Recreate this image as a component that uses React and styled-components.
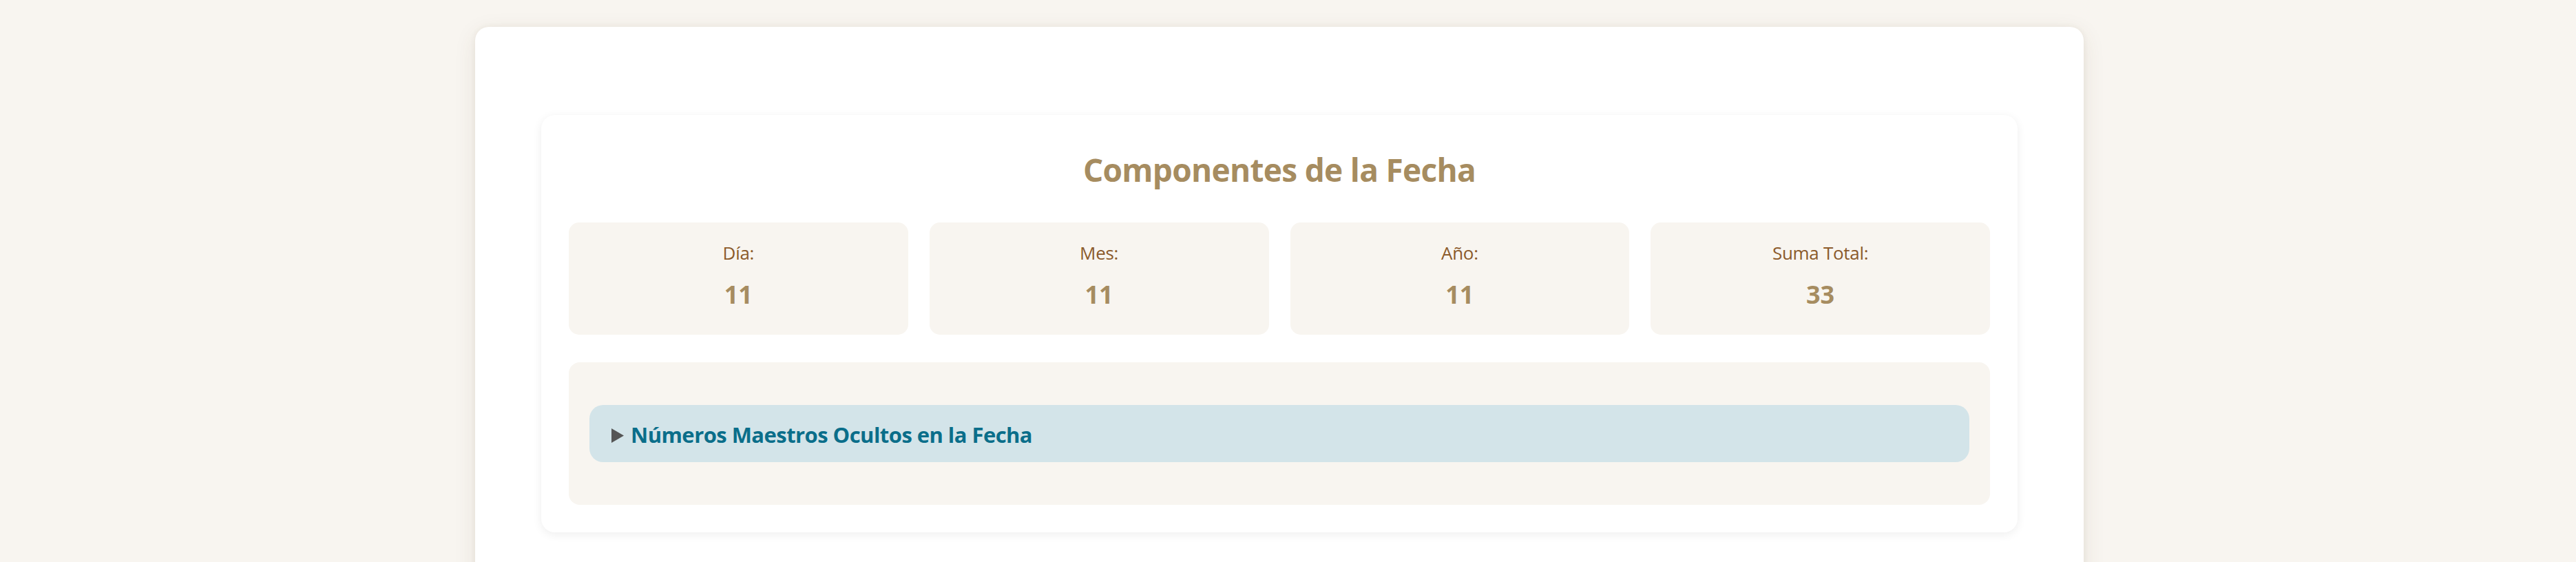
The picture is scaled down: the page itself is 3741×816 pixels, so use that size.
import styled, { createGlobalStyle } from "styled-components";

const GlobalStyle = createGlobalStyle`
  html, body {
    margin: 0;
    padding: 0;
    background: #f8f5f0;
    font-family: "Open Sans", "Noto Sans", sans-serif;
  }
`;

const Page = styled.div`
  padding: 39px 25px 0 0;
  min-height: 816px;
  box-sizing: border-box;
`;

const Sheet = styled.div`
  width: 2336px;
  margin: 0 auto;
  box-sizing: border-box;
  padding: 128px 96px 96px;
  background: #fff;
  border-radius: 20px;
  box-shadow: 0 8px 32px rgba(90, 70, 40, 0.1), 0 0 8px rgba(90, 70, 40, 0.06);
`;

const Section = styled.section`
  background: #fff;
  border-radius: 20px;
  padding: 40px;
  box-shadow: 0 3px 14px rgba(0, 0, 0, 0.07);
`;

const Title = styled.h2`
  margin: 11px 0 49px;
  text-align: center;
  font-size: 46px;
  line-height: 56px;
  letter-spacing: -0.7px;
  font-weight: 700;
  color: #a68c60;
`;

const StatGrid = styled.div`
  display: grid;
  grid-template-columns: repeat(4, 1fr);
  gap: 31px;
`;

const StatBox = styled.div`
  background: #f8f5f0;
  border-radius: 15px;
  padding: 27px 20px 36px;
  text-align: center;
`;

const StatLabel = styled.div`
  font-size: 26px;
  line-height: 34px;
  letter-spacing: -0.3px;
  color: #8b5a2b;
  margin-bottom: 22px;
`;

const StatValue = styled.div`
  font-size: 36px;
  line-height: 44px;
  font-weight: 700;
  color: #a68c60;
`;

const Hidden = styled.div`
  margin-top: 40px;
  background: #f8f5f0;
  border-radius: 16px;
  padding: 62px 30px;
`;

const Details = styled.details`
  background: #d3e4e9;
  border-radius: 20px;
`;

const Summary = styled.summary`
  list-style: none;
  display: flex;
  align-items: center;
  gap: 10px;
  padding: 23px 32px 20px;
  cursor: pointer;
  font-size: 31px;
  line-height: 40px;
  letter-spacing: -0.55px;
  font-weight: 700;
  color: #0a6e8a;

  &::-webkit-details-marker {
    display: none;
  }
`;

const Marker = styled.svg`
  flex: none;
  margin-top: 2px;
`;

const stats = [
  { label: "Día:", value: 11 },
  { label: "Mes:", value: 11 },
  { label: "Año:", value: 11 },
  { label: "Suma Total:", value: 33 },
];

export default function App() {
  return (
    <>
      <GlobalStyle />
      <Page>
        <Sheet>
          <Section>
            <Title>Componentes de la Fecha</Title>
            <StatGrid>
              {stats.map((s) => (
                <StatBox key={s.label}>
                  <StatLabel>{s.label}</StatLabel>
                  <StatValue>{s.value}</StatValue>
                </StatBox>
              ))}
            </StatGrid>
            <Hidden>
              <Details>
                <Summary>
                  <Marker width="18" height="21" viewBox="0 0 18 21">
                    <polygon points="0,0 18,10.5 0,21" fill="#555" />
                  </Marker>
                  Números Maestros Ocultos en la Fecha
                </Summary>
              </Details>
            </Hidden>
          </Section>
        </Sheet>
      </Page>
    </>
  );
}
